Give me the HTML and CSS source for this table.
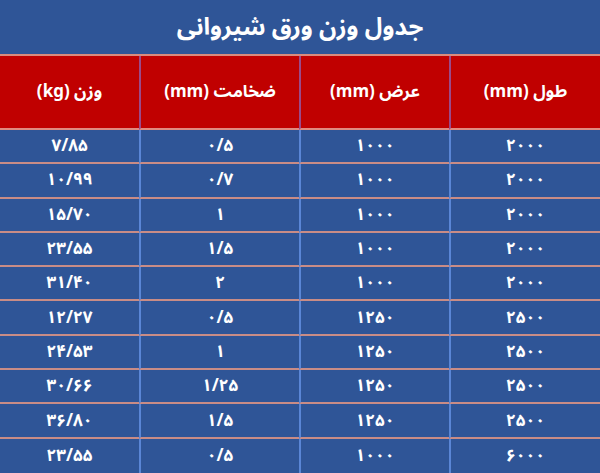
FILE: index.html
```html
<!DOCTYPE html>
<html lang="fa" dir="rtl">
<head>
<meta charset="utf-8">
<title>جدول وزن ورق شیروانی</title>
<link rel="stylesheet" href="styles.css">
</head>
<body>
<div class="page">
  <h1 class="title">جدول وزن ورق شیروانی</h1>
  <div class="grid">
    <div class="cell head">طول (mm)</div>
    <div class="cell head">عرض (mm)</div>
    <div class="cell head">ضخامت (mm)</div>
    <div class="cell head last">وزن (kg)</div>

    <div class="cell">۲۰۰۰</div><div class="cell">۱۰۰۰</div><div class="cell">۰/۵</div><div class="cell last">۷/۸۵</div>
    <div class="cell">۲۰۰۰</div><div class="cell">۱۰۰۰</div><div class="cell">۰/۷</div><div class="cell last">۱۰/۹۹</div>
    <div class="cell">۲۰۰۰</div><div class="cell">۱۰۰۰</div><div class="cell">۱</div><div class="cell last">۱۵/۷۰</div>
    <div class="cell">۲۰۰۰</div><div class="cell">۱۰۰۰</div><div class="cell">۱/۵</div><div class="cell last">۲۳/۵۵</div>
    <div class="cell">۲۰۰۰</div><div class="cell">۱۰۰۰</div><div class="cell">۲</div><div class="cell last">۳۱/۴۰</div>
    <div class="cell">۲۵۰۰</div><div class="cell">۱۲۵۰</div><div class="cell">۰/۵</div><div class="cell last">۱۲/۲۷</div>
    <div class="cell">۲۵۰۰</div><div class="cell">۱۲۵۰</div><div class="cell">۱</div><div class="cell last">۲۴/۵۳</div>
    <div class="cell">۲۵۰۰</div><div class="cell">۱۲۵۰</div><div class="cell">۱/۲۵</div><div class="cell last">۳۰/۶۶</div>
    <div class="cell">۲۵۰۰</div><div class="cell">۱۲۵۰</div><div class="cell">۱/۵</div><div class="cell last">۳۶/۸۰</div>
    <div class="cell end">۶۰۰۰</div><div class="cell end">۱۰۰۰</div><div class="cell end">۰/۵</div><div class="cell end last">۲۳/۵۵</div>
  </div>
</div>
</body>
</html>
```

FILE: styles.css
```css
html, body {
  margin: 0;
  padding: 0;
  background: #2f5597;
}
.page {
  width: 600px;
  height: 473px;
  overflow: hidden;
  background: #2f5597;
  color: #ffffff;
  font-family: "Noto Sans Arabic", "DejaVu Sans", sans-serif;
}
.title {
  margin: 0;
  height: 54px;
  display: flex;
  align-items: center;
  justify-content: center;
  font-size: 24px;
  font-weight: bold;
  border-bottom: 2px solid #d98b7e;
}
.grid {
  display: grid;
  grid-template-columns: 151px 150px 160px 139px;
  grid-template-rows: 74px repeat(10, 34.3px);
}
.cell {
  box-sizing: border-box;
  display: flex;
  align-items: center;
  justify-content: center;
  border-bottom: 2px solid #c98c86;
  border-left: 2px solid #5a86d6;
  font-size: 17px;
  font-weight: bold;
}
.cell.last {
  border-left: none;
}
.cell.end {
  border-bottom: none;
}
.head {
  background: #c00000;
  border-left-color: #9a4a8a;
  border-bottom-color: #e08a80;
  font-size: 17px;
}
```
